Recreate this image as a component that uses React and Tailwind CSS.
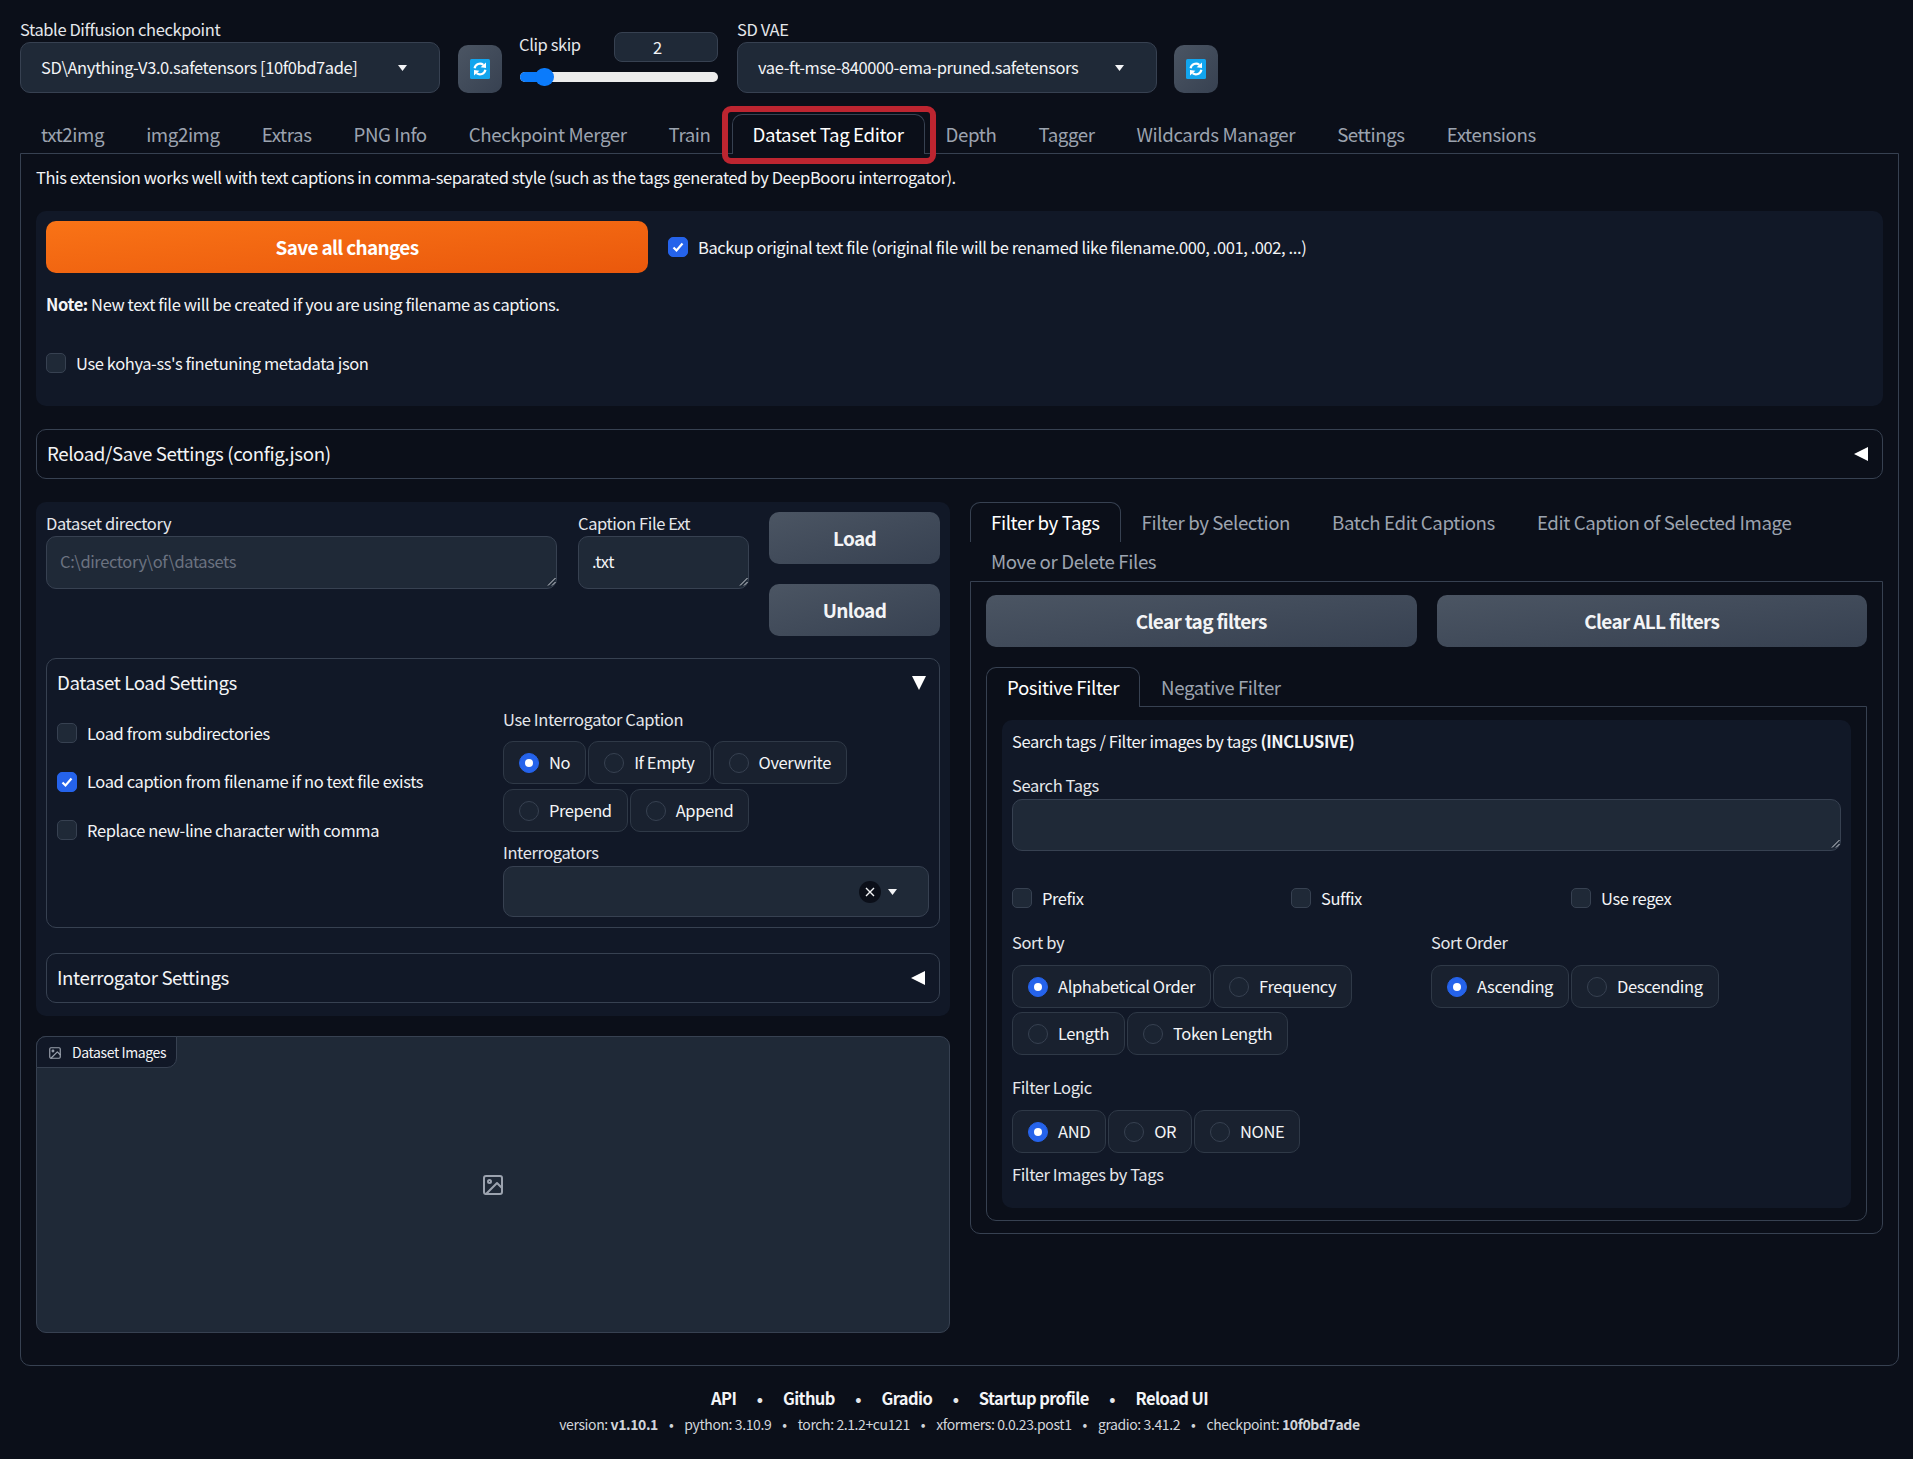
import React from 'react';

const topTabs = ['txt2img', 'img2img', 'Extras', 'PNG Info', 'Checkpoint Merger', 'Train', 'Dataset Tag Editor', 'Depth', 'Tagger', 'Wildcards Manager', 'Settings', 'Extensions'];
const editorTabs = ['Filter by Tags', 'Filter by Selection', 'Batch Edit Captions', 'Edit Caption of Selected Image', 'Move or Delete Files'];
const versions = [
  ['version: ', 'v1.10.1'],
  ['python: 3.10.9'],
  ['torch: 2.1.2+cu121'],
  ['xformers: 0.0.23.post1'],
  ['gradio: 3.41.2'],
  ['checkpoint: ', '10f0bd7ade'],
];

const Caret = () => (
  <svg width="9" height="6" viewBox="0 0 9 6" className="shrink-0">
    <polygon points="0,0 9,0 4.5,6" fill="#f3f4f6" />
  </svg>
);

const RefreshIcon = () => (
  <svg width="20" height="20" viewBox="0 0 20 20">
    <rect width="20" height="20" rx="1.5" fill="#12a5ee" />
    <g fill="none" stroke="#fff" strokeWidth="2.2">
      <path d="M4.6 9.2A5.5 5.5 0 0 1 13.4 5.9" />
      <path d="M15.4 10.8A5.5 5.5 0 0 1 6.6 14.1" />
    </g>
    <polygon points="16,3.4 16,9 10.6,8.2" fill="#fff" />
    <polygon points="4,16.6 4,11 9.4,11.8" fill="#fff" />
  </svg>
);

const ImageIcon = ({ size, stroke }) => (
  <svg width={size} height={size} viewBox="0 0 24 24" fill="none" stroke={stroke} strokeWidth="2" strokeLinecap="round" strokeLinejoin="round">
    <rect x="3" y="3" width="18" height="18" rx="2" ry="2" />
    <circle cx="8.5" cy="8.5" r="1.5" />
    <polyline points="21 15 16 10 5 21" />
  </svg>
);

const SelectBox = ({ value, width }) => (
  <div className={`flex h-[51px] items-center justify-between rounded-[10px] border border-[#374151] bg-[#1f2937] pl-5 pr-[32px] text-[16.5px] text-[#f3f4f6] ${width}`}>
    <span>{value}</span>
    <Caret />
  </div>
);

const RefreshButton = () => (
  <button className="flex h-12 w-11 items-center justify-center rounded-[10px] bg-linear-to-br from-[#4b5563] to-[#374151]">
    <RefreshIcon />
  </button>
);

const Tab = ({ label, active, highlight }) => (
  <div className={`relative -mb-px flex h-10 items-center border border-b-0 px-[20px] text-[18.7px] ${active ? 'z-10 rounded-t-[10px] border-[#374151] bg-[#0b0f19] text-white' : 'border-transparent text-[#9ca3af]'}`}>
    <span className="pb-px">{label}</span>
    {highlight && <div className="pointer-events-none absolute -top-[9px] -right-[12px] -bottom-[10px] -left-[11px] rounded-[9px] border-[6px] border-[#bd2530]" />}
  </div>
);

const Check = ({ label, checked }) => (
  <label className="flex items-center gap-[10px] text-[16.5px] text-[#f3f4f6]">
    <span className={`flex h-5 w-5 shrink-0 items-center justify-center rounded-[5px] border ${checked ? 'border-[#2563eb] bg-[#2563eb]' : 'border-[#374151] bg-[#1f2937]'}`}>
      {checked && (
        <svg width="14" height="14" viewBox="0 0 14 14" fill="none" stroke="#fff" strokeWidth="2.2">
          <polyline points="2.5,7.5 5.5,10.5 11.5,3.5" />
        </svg>
      )}
    </span>
    <span className="pb-px leading-[18px]">{label}</span>
  </label>
);

const Radio = ({ label, checked }) => (
  <div className="flex h-[43px] items-center gap-[10px] rounded-[10px] border border-[#2f3947] bg-[#19212f] pl-[15px] pr-[15px] text-[16.5px] text-[#f3f4f6]">
    <span className={`flex h-5 w-5 items-center justify-center rounded-full border ${checked ? 'border-[#2563eb] bg-[#2563eb]' : 'border-[#374151] bg-[#1b2432]'}`}>
      {checked && <span className="h-2 w-2 rounded-full bg-white" />}
    </span>
    {label}
  </div>
);

const FieldLabel = ({ children, className = '' }) => (
  <div className={`h-5 text-[16.5px] leading-[18px] text-[#e5e7eb] ${className}`}>{children}</div>
);

const Accordion = ({ title, className = '' }) => (
  <div className={`flex h-[50px] items-center justify-between rounded-[10px] border border-[#374151] px-[10px] text-[18.7px] text-[#f3f4f6] ${className}`}>
    <span className="pb-[2px]">{title}</span>
    <svg width="16" height="16" viewBox="0 0 16 16" className="mr-[3px]">
      <polygon points="15,1 15,15 1,8" fill="#fff" />
    </svg>
  </div>
);

const TextBox = ({ value, placeholder, height = 'h-[53px]' }) => (
  <div className="relative">
    <textarea
      readOnly
      value={value ?? ''}
      placeholder={placeholder}
      className={`block w-full resize-none rounded-[10px] border border-[#374151] bg-[#1f2937] px-[13px] py-3 text-[16.5px] leading-6 text-[#f3f4f6] outline-none placeholder:text-[#6b7280] ${height}`}
    />
    <svg width="9" height="9" viewBox="0 0 9 9" stroke="#d1d5db" strokeWidth="1" className="absolute bottom-[3px] right-px">
      <path d="M1 8.5L8.5 1M5 8.5L8.5 5" />
    </svg>
  </div>
);

const GrayButton = ({ children, className = '' }) => (
  <button className={`h-[52px] rounded-[10px] bg-linear-to-br from-[#4b5563] to-[#374151] text-[19px] font-semibold tracking-[-0.036em] text-[#f3f4f6] ${className}`}>
    {children}
  </button>
);

const Dot = () => <span className="text-[#e5e7eb]">•</span>;

const App = () => {
  return (
    <div className="min-h-screen bg-[#0b0f19] pl-5 pr-[14px] pt-5 font-['Noto_Sans_CJK_JP','Noto_Sans',sans-serif] tracking-[-0.025em] text-[#f3f4f6]">
      {/* model selectors */}
      <div className="flex h-[73px]">
        <div className="w-[420px]">
          <FieldLabel className="mb-[2px]">Stable Diffusion checkpoint</FieldLabel>
          <SelectBox value="SD\Anything-V3.0.safetensors [10f0bd7ade]" width="w-[420px]" />
        </div>
        <div className="ml-[18px] mt-[25px]">
          <RefreshButton />
        </div>
        <div className="ml-[17px] mt-3 w-[199px]">
          <div className="flex items-start justify-between">
            <FieldLabel className="mt-[3px]">Clip skip</FieldLabel>
            <input
              readOnly
              value="2"
              className="h-[30px] w-[104px] rounded-[8px] border border-[#374151] bg-[#1f2937] pl-[38px] text-[16.5px] text-[#f3f4f6] outline-none"
            />
          </div>
          <div className="relative mt-[10px] ml-px h-[10px] rounded-full bg-[#ececec]">
            <div className="h-full w-[26px] rounded-l-full bg-[#0b7bfb]" />
            <div className="absolute -top-1 left-[15px] h-[18px] w-[19px] rounded-full bg-[#0b7bfb]" />
          </div>
        </div>
        <div className="ml-[19px] w-[420px]">
          <FieldLabel className="mb-[2px]">SD VAE</FieldLabel>
          <SelectBox value="vae-ft-mse-840000-ema-pruned.safetensors" width="w-[420px]" />
        </div>
        <div className="ml-[17px] mt-[25px]">
          <RefreshButton />
        </div>
      </div>

      {/* main tabs */}
      <div className="mt-[21px] flex">
        {topTabs.map((t) => (
          <Tab key={t} label={t} active={t === 'Dataset Tag Editor'} highlight={t === 'Dataset Tag Editor'} />
        ))}
      </div>

      <div className="rounded-b-[10px] border border-[#374151] px-[15px] pb-8 pt-[14px]">
        <p className="h-[43px] text-[16.5px] leading-[19px] text-[#f3f4f6]">
          This extension works well with text captions in comma-separated style (such as the tags generated by DeepBooru interrogator).
        </p>

        {/* save panel */}
        <div className="h-[195px] rounded-[10px] bg-[#111827] px-[10px] pt-[10px]">
          <div className="flex items-center gap-5">
            <button className="h-[52px] w-[602px] rounded-[10px] bg-linear-to-br from-[#f97316] to-[#ea580c] text-[19px] font-semibold tracking-[-0.036em] text-white">
              Save all changes
            </button>
            <Check checked label="Backup original text file (original file will be renamed like filename.000, .001, .002, ...)" />
          </div>
          <p className="mt-[22px] h-5 text-[16.5px] leading-[19px]">
            <b className="font-bold">Note:</b> New text file will be created if you are using filename as captions.
          </p>
          <div className="mt-[38px]">
            <Check label="Use kohya-ss's finetuning metadata json" />
          </div>
        </div>

        <Accordion title="Reload/Save Settings (config.json)" className="mt-[23px]" />

        <div className="mt-[23px] flex items-start gap-5">
          {/* left column */}
          <div className="w-[914px] shrink-0">
            <div className="rounded-[10px] bg-[#111827] px-[10px] pb-[13px] pt-[10px]">
              <div className="flex">
                <div className="w-[511px] pt-[2px]">
                  <FieldLabel className="mb-[2px]">Dataset directory</FieldLabel>
                  <TextBox placeholder="C:\directory\of\datasets" />
                </div>
                <div className="ml-[21px] w-[171px] pt-[2px]">
                  <FieldLabel className="mb-[2px]">Caption File Ext</FieldLabel>
                  <TextBox value=".txt" />
                </div>
                <div className="ml-5 flex w-[171px] flex-col gap-5">
                  <GrayButton>Load</GrayButton>
                  <GrayButton>Unload</GrayButton>
                </div>
              </div>

              <div className="mt-[22px] h-[270px] rounded-[10px] border border-[#374151] px-[10px] pt-[12px]">
                <div className="flex h-6 items-center justify-between text-[18.7px] leading-6">
                  <span className="pb-[2px]">Dataset Load Settings</span>
                  <svg width="16" height="16" viewBox="0 0 16 16" className="mr-[2px]">
                    <polygon points="1,1 15,1 8,15" fill="#fff" />
                  </svg>
                </div>
                <div className="mt-[15px] flex">
                  <div className="flex w-[446px] flex-col gap-[28.5px] pt-[13px]">
                    <Check label="Load from subdirectories" />
                    <Check checked label="Load caption from filename if no text file exists" />
                    <Check label="Replace new-line character with comma" />
                  </div>
                  <div className="w-[426px]">
                    <FieldLabel>Use Interrogator Caption</FieldLabel>
                    <div className="mt-[11px] flex flex-wrap gap-x-[2px] gap-y-[5px]">
                      <Radio checked label="No" />
                      <Radio label="If Empty" />
                      <Radio label="Overwrite" />
                      <Radio label="Prepend" />
                      <Radio label="Append" />
                    </div>
                    <FieldLabel className="mt-[11px]">Interrogators</FieldLabel>
                    <div className="mt-[3px] flex h-[51px] items-center justify-end rounded-[10px] border border-[#374151] bg-[#1f2937] pr-[31px]">
                      <span className="mr-[7px] flex h-[22px] w-[22px] items-center justify-center rounded-full bg-[#0b0f19]">
                        <svg width="10" height="10" viewBox="0 0 10 10" stroke="#f3f4f6" strokeWidth="1.4">
                          <path d="M1 1l8 8M9 1l-8 8" />
                        </svg>
                      </span>
                      <Caret />
                    </div>
                  </div>
                </div>
              </div>

              <Accordion title="Interrogator Settings" className="mt-[25px]" />
            </div>

            {/* gallery */}
            <div className="relative mt-5 flex h-[297px] items-center justify-center rounded-[10px] border border-[#374151] bg-[#1f2937]">
              <div className="absolute -left-px -top-px flex h-8 items-center gap-[10px] rounded-br-[10px] rounded-tl-[10px] border border-[#374151] bg-[#111827] pl-[11px] pr-[10px] pt-px text-[14px] text-[#f3f4f6]">
                <ImageIcon size={14} stroke="#9ca3af" />
                Dataset Images
              </div>
              <ImageIcon size={24} stroke="#9ca3af" />
            </div>
          </div>

          {/* right column */}
          <div className="w-[913px] shrink-0">
            <div className="flex flex-wrap">
              {editorTabs.map((t) => (
                <Tab key={t} label={t} active={t === 'Filter by Tags'} />
              ))}
            </div>
            <div className="mt-px rounded-b-[10px] border border-[#374151] px-[15px] pb-3 pt-[13px]">
              <div className="flex gap-5">
                <GrayButton className="flex-1">Clear tag filters</GrayButton>
                <GrayButton className="flex-1">Clear ALL filters</GrayButton>
              </div>
              <div className="mt-[20px] flex">
                <Tab label="Positive Filter" active />
                <Tab label="Negative Filter" />
              </div>
              <div className="rounded-b-[10px] border border-[#374151] px-[15px] pb-3 pt-[13px]">
                <div className="rounded-[10px] bg-[#111827] px-[10px] pb-[23px] pt-3">
                  <p className="h-5 text-[16.5px] leading-[19px]">
                    Search tags / Filter images by tags <b className="font-bold">(INCLUSIVE)</b>
                  </p>
                  <FieldLabel className="mt-6">Search Tags</FieldLabel>
                  <div className="mt-[3px]">
                    <TextBox height="h-[52px]" />
                  </div>
                  <div className="mt-[37px] grid grid-cols-[279px_280px_1fr]">
                    <Check label="Prefix" />
                    <Check label="Suffix" />
                    <Check label="Use regex" />
                  </div>
                  <div className="mt-[25px] flex">
                    <div className="w-[419px]">
                      <FieldLabel>Sort by</FieldLabel>
                      <div className="mt-3 flex flex-wrap gap-x-[2px] gap-y-1 pr-5">
                        <Radio checked label="Alphabetical Order" />
                        <Radio label="Frequency" />
                        <Radio label="Length" />
                        <Radio label="Token Length" />
                      </div>
                    </div>
                    <div>
                      <FieldLabel>Sort Order</FieldLabel>
                      <div className="mt-3 flex gap-[2px]">
                        <Radio checked label="Ascending" />
                        <Radio label="Descending" />
                      </div>
                    </div>
                  </div>
                  <FieldLabel className="mt-[23px]">Filter Logic</FieldLabel>
                  <div className="mt-3 flex gap-[2px]">
                    <Radio checked label="AND" />
                    <Radio label="OR" />
                    <Radio label="NONE" />
                  </div>
                  <FieldLabel className="mt-3">Filter Images by Tags</FieldLabel>
                </div>
              </div>
            </div>
          </div>
        </div>
      </div>

      {/* footer */}
      <div className="mt-[22px] flex justify-center gap-[20.5px] text-[16.5px] font-semibold leading-5 tracking-[-0.036em] text-[#f3f4f6]">
        <span>API</span><Dot />
        <span>Github</span><Dot />
        <span>Gradio</span><Dot />
        <span>Startup profile</span><Dot />
        <span>Reload UI</span>
      </div>
      <div className="mt-[6px] flex justify-center gap-[11px] pb-[26px] text-[14px] leading-5 text-[#d1d5db]">
        {versions.map(([text, bold], i) => (
          <React.Fragment key={text}>
            {i > 0 && <span>•</span>}
            <span className="whitespace-pre">{text}{bold && <b className="font-bold">{bold}</b>}</span>
          </React.Fragment>
        ))}
      </div>
    </div>
  );
};

export default App;
